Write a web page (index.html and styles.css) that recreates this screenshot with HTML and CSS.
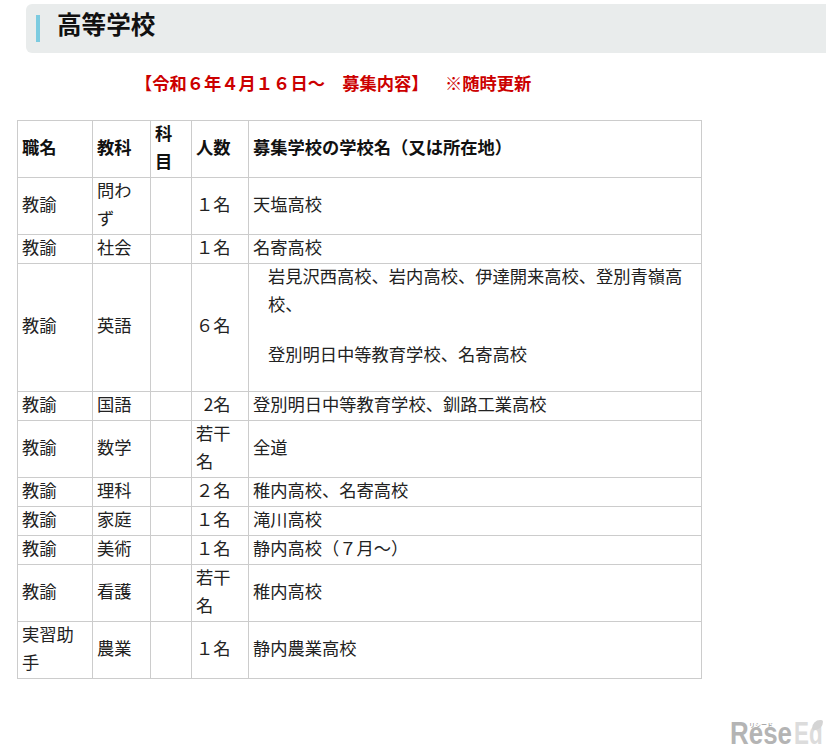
FILE: index.html
```html
<!DOCTYPE html>
<html lang="ja">
<head>
<meta charset="utf-8">
<title>高等学校</title>
<link rel="stylesheet" href="styles.css">
</head>
<body>
<main class="page">
  <h2 class="heading"><span class="heading-text">高等学校</span></h2>
  <p class="notice">【令和６年４月１６日～　募集内容】　&nbsp;&nbsp;※随時更新</p>
  <table class="jobs">
    <colgroup>
      <col class="c1"><col class="c2"><col class="c3"><col class="c4"><col class="c5">
    </colgroup>
    <tr class="head"><th>職名</th><th>教科</th><th>科目</th><th>人数</th><th>募集学校の学校名（又は所在地）</th></tr>
    <tr><td>教諭</td><td>問わず</td><td></td><td>１名</td><td>天塩高校</td></tr>
    <tr><td>教諭</td><td>社会</td><td></td><td>１名</td><td>名寄高校</td></tr>
    <tr><td>教諭</td><td>英語</td><td></td><td>６名</td><td><p class="para">岩見沢西高校、岩内高校、伊達開来高校、登別青嶺高校、</p><p class="para">登別明日中等教育学校、名寄高校</p></td></tr>
    <tr><td>教諭</td><td>国語</td><td></td><td>&nbsp;&nbsp;2名</td><td>登別明日中等教育学校、釧路工業高校</td></tr>
    <tr><td>教諭</td><td>数学</td><td></td><td>若干名</td><td>全道</td></tr>
    <tr><td>教諭</td><td>理科</td><td></td><td>２名</td><td>稚内高校、名寄高校</td></tr>
    <tr><td>教諭</td><td>家庭</td><td></td><td>１名</td><td>滝川高校</td></tr>
    <tr><td>教諭</td><td>美術</td><td></td><td>１名</td><td>静内高校（７月～）</td></tr>
    <tr><td>教諭</td><td>看護</td><td></td><td>若干名</td><td>稚内高校</td></tr>
    <tr><td>実習助手</td><td>農業</td><td></td><td>１名</td><td>静内農業高校</td></tr>
  </table>
</main>
<div class="logo"><span class="logo-kana">リシード</span><span class="logo-a">Rese</span><span class="logo-b">Ed</span><span class="logo-leaf"></span></div>
</body>
</html>
```
FILE: styles.css
```css
* { box-sizing: border-box; }
html, body { margin: 0; padding: 0; background: #fff; }
body {
  width: 826px;
  height: 750px;
  overflow: hidden;
  position: relative;
  font-family: "Noto Sans CJK JP", "Liberation Sans", sans-serif;
  color: #222;
  font-size: 17.28px;
}
.page { padding: 4px 0 0 0; }
.heading {
  margin: 0 0 0 26px;
  height: 49px;
  background: #e9ecec;
  border-radius: 6px 0 0 6px;
  padding: 11px 0 0 10px;
  font-size: 24.6px;
  font-weight: 700;
  color: #111;
}
.heading-text {
  display: block;
  border-left: 4px solid #7ccbe0;
  padding-left: 17px;
  height: 27px;
  line-height: 17px;
}
.notice {
  margin: 18px 0 0 135px;
  height: 24px;
  line-height: 23px;
  font-weight: 700;
  color: #cc0000;
}
.jobs {
  margin: 25px 0 0 17px;
  width: 684px;
  border-collapse: collapse;
  table-layout: fixed;
  line-height: 28.08px;
}
.c1 { width: 75px; }
.c2 { width: 58px; }
.c3 { width: 41px; }
.c4 { width: 57px; }
.c5 { width: 453px; }
.jobs th, .jobs td {
  border: 1px solid #ccc;
  padding: 0 4px 2px;
  text-align: left;
  vertical-align: middle;
  font-weight: 400;
}
.jobs th::before, .jobs td::before {
  content: "";
  display: block;
  margin-top: -2px;
}
.jobs th { font-weight: 700; color: #111; }
.para { margin: 0 0 21px; padding: 0 10px 0 15px; }
.logo {
  position: absolute;
  left: 730px;
  top: 716px;
  width: 96px;
  height: 34px;
  display: flex;
  font-family: "Liberation Sans", sans-serif;
  font-size: 32px;
  font-weight: 700;
  line-height: 34px;
  white-space: nowrap;
}
.logo-kana {
  position: absolute;
  left: 19px;
  top: 5px;
  font-family: "Noto Sans CJK JP", sans-serif;
  font-size: 6px;
  line-height: 7px;
  font-weight: 500;
  color: #999;
}
.logo-a {
  width: 64px;
  color: #b4b4b4;
  transform: scaleX(.81);
  transform-origin: left center;
}
.logo-b {
  width: 32px;
  color: #dcdcdc;
  transform: scaleX(.7);
  transform-origin: left center;
}
.logo-leaf {
  position: absolute;
  left: 82px;
  top: 4px;
  width: 11px;
  height: 10px;
  background: #d4d4d4;
  border-radius: 9px 2px 9px 2px;
}
```
